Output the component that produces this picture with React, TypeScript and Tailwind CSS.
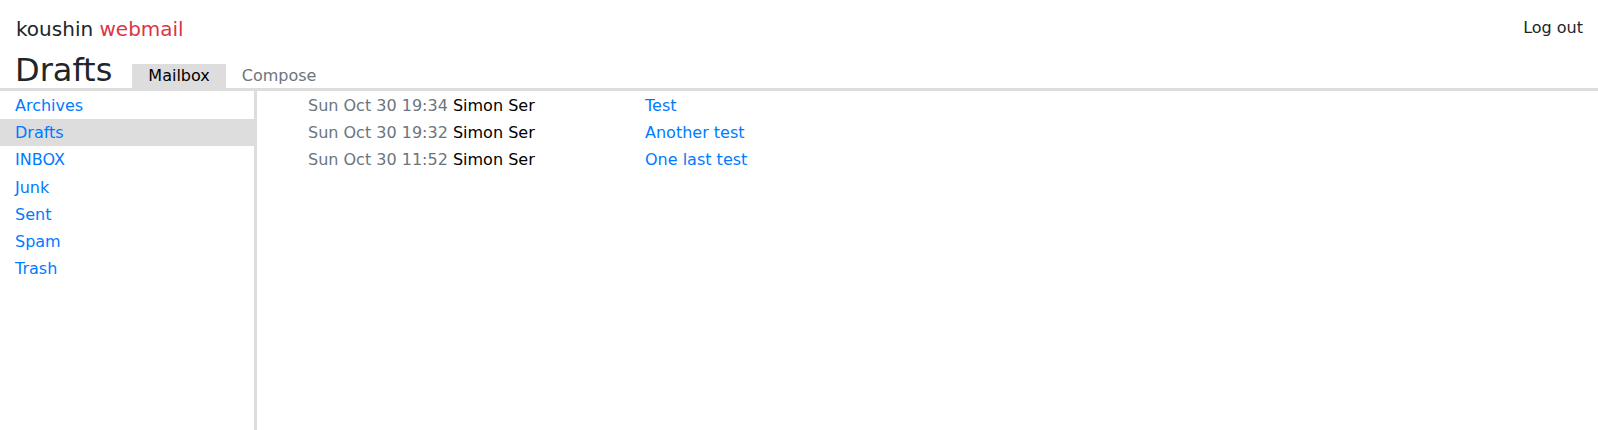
const mailboxes = ['Archives', 'Drafts', 'INBOX', 'Junk', 'Sent', 'Spam', 'Trash']

const messages = [
    { date: 'Sun Oct 30 19:34', from: 'Simon Ser', subject: 'Test' },
    { date: 'Sun Oct 30 19:32', from: 'Simon Ser', subject: 'Another test' },
    { date: 'Sun Oct 30 11:52', from: 'Simon Ser', subject: 'One last test' },
]

const App = () => {
    const current = 'Drafts'

    return (
        <div className="min-h-screen flex flex-col bg-white text-[#212529] text-[16px]" style={{ fontFamily: '"DejaVu Sans", sans-serif' }}>
            <header className="flex justify-between items-center px-4 pt-[14px]">
                <div className="text-[20px] leading-[30px]">
                    koushin <span className="text-[#dc3545]">webmail</span>
                </div>
                <a href="#" className="text-[#212529] leading-[24px] mr-[-1px] mb-[2px]">
                    Log out
                </a>
            </header>

            <div className="flex items-end pl-[15px] pr-4 mt-[8px] border-b-[3px] border-[#dddddd]">
                <h1 className="text-[32px] leading-[36px] mr-[20px]">{current}</h1>
                <nav className="flex">
                    <a href="#" className="px-4 leading-[24px] bg-[#dddddd] text-black">Mailbox</a>
                    <a href="#" className="px-4 leading-[24px] text-[#6c757d]">Compose</a>
                </nav>
            </div>

            <div className="flex flex-1">
                <aside className="w-[257px] shrink-0 pt-[1px] border-r-[3px] border-[#dddddd]">
                    <ul>
                        {mailboxes.map((name) => (
                            <li key={name} className={name === current ? 'bg-[#dddddd]' : ''}>
                                <a href="#" className="block pl-[15px] leading-[27.2px] text-[#007bff]">
                                    {name}
                                </a>
                            </li>
                        ))}
                    </ul>
                </aside>
                <main className="flex-1 pt-[1px] pl-[51px]">
                    {messages.map((msg) => (
                        <div key={msg.date} className="flex leading-[27.2px]">
                            <div className="w-[337px] shrink-0">
                                <span className="text-[#6c757d]">{msg.date}</span>{' '}
                                <span className="text-black">{msg.from}</span>
                            </div>
                            <a href="#" className="text-[#007bff]">{msg.subject}</a>
                        </div>
                    ))}
                </main>
            </div>
        </div>
    )
}

export default App
